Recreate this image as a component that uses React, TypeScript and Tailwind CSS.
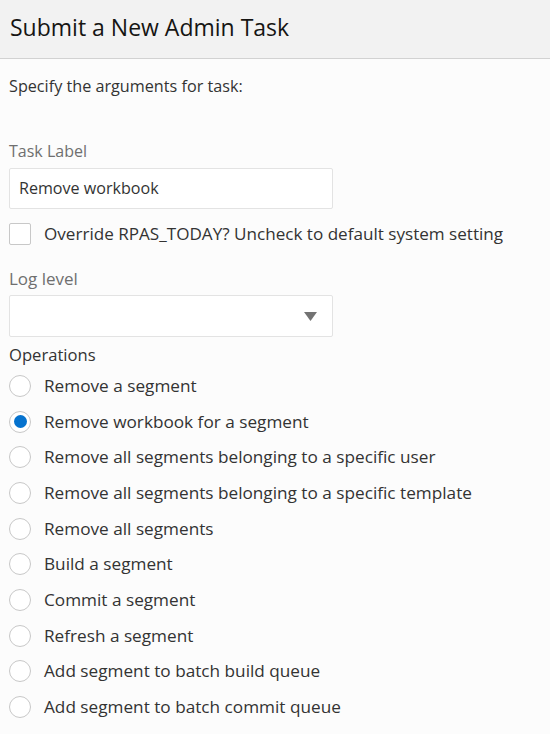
import React from "react";

const operations = [
  "Remove a segment",
  "Remove workbook for a segment",
  "Remove all segments belonging to a specific user",
  "Remove all segments belonging to a specific template",
  "Remove all segments",
  "Build a segment",
  "Commit a segment",
  "Refresh a segment",
  "Add segment to batch build queue",
  "Add segment to batch commit queue",
];

function Radio({ label, checked }: { label: string; checked?: boolean }) {
  return (
    <div className="flex items-center h-[35.7px]">
      <span className="w-[22px] h-[22px] rounded-full border border-[#c8c8c8] bg-white flex items-center justify-center">
        {checked && <span className="w-[13px] h-[13px] rounded-full bg-[#0572ce]" />}
      </span>
      <span className="ml-[13px] text-[17.2px] leading-[22px] text-[#333]">{label}</span>
    </div>
  );
}

export default function App() {
  return (
    <div className="w-[550px] h-[734px] bg-[#fcfcfc] text-[#333] font-['Open_Sans',sans-serif] overflow-hidden">
      {/* Header */}
      <div className="h-[59px] bg-[#f2f2f2] border-b border-[#d2d2d2] flex items-center px-[10px] pb-[4px]">
        <h1 className="text-[23px] text-[#161513]">Submit a New Admin Task</h1>
      </div>

      <div className="px-[9px]">
        <p className="mt-[16px] text-[16.2px] text-[#333] leading-[22px]">Specify the arguments for task:</p>

        {/* Task label */}
        <div className="mt-[43px] text-[16px] text-[#6f6f6f] leading-[22px]">Task Label</div>
        <div className="mt-[6px] w-[324px] h-[41px] border border-[#e3e3e3] bg-white rounded-[2px] flex items-center px-[9px] text-[16.1px] text-[#333]">
          Remove workbook
        </div>

        <div className="mt-[14px] flex items-center">
          <span className="w-[22px] h-[22px] border border-[#c8c8c8] rounded-[2px] bg-white" />
          <span className="ml-[13px] text-[17.1px] leading-[22px] text-[#333]">Override RPAS_TODAY? Uncheck to default system setting</span>
        </div>

        {/* Log level */}
        <div className="mt-[23px] text-[17px] text-[#6f6f6f] leading-[22px]">Log level</div>
        <div className="mt-[5px] w-[324px] h-[42px] border border-[#e3e3e3] bg-white rounded-[2px] flex items-center justify-end pr-[15px]">
          <svg width="13" height="9" viewBox="0 0 13 9">
            <path d="M0 0 L13 0 L6.5 9 Z" fill="#737373" />
          </svg>
        </div>

        {/* Operations */}
        <div className="mt-[7px] text-[16.6px] text-[#333] leading-[22px]">Operations</div>
        <div className="mt-[2px] flex flex-col">
          {operations.map((op, i) => (
            <Radio key={op} label={op} checked={i === 1} />
          ))}
        </div>
      </div>
    </div>
  );
}
